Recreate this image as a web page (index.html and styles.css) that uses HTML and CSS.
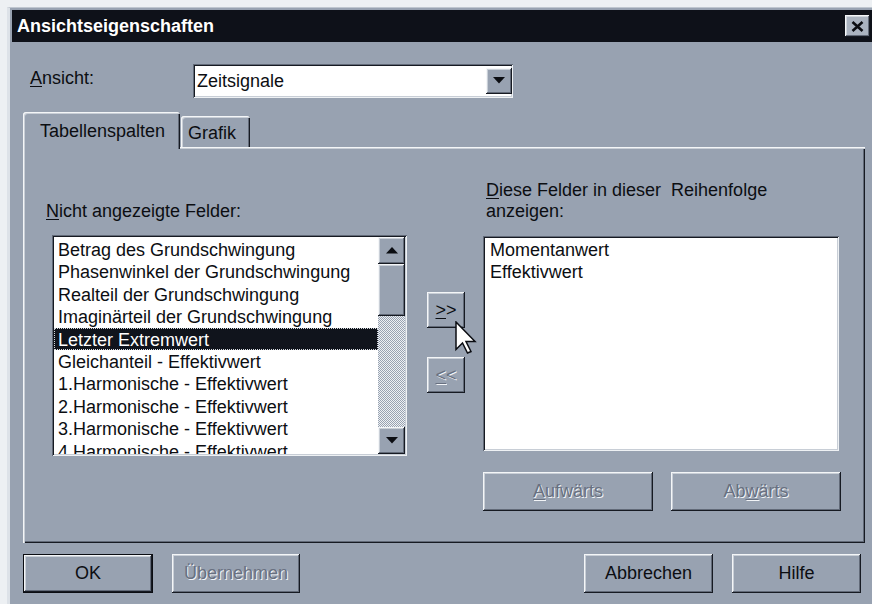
FILE: index.html
```html
<!DOCTYPE html>
<html lang="de">
<head>
<meta charset="utf-8">
<title>Ansichtseigenschaften</title>
<link rel="stylesheet" href="styles.css">
</head>
<body>
<div class="window">
  <div class="titlebar">
    <span class="title">Ansichtseigenschaften</span>
    <span class="close-btn">
      <svg width="13" height="11" viewBox="0 0 13 11"><path d="M1.5 1 L11.5 10 M11.5 1 L1.5 10" stroke="#0b0d12" stroke-width="2.6" fill="none"/></svg>
    </span>
  </div>

  <div class="content">
    <div class="view-row">
      <span class="view-label"><u>A</u>nsicht:</span>
      <div class="combo">
        <span class="combo-text">Zeitsignale</span>
        <span class="combo-btn">
          <svg width="12" height="7" viewBox="0 0 12 7"><path d="M0 0 H12 L6 6.5 Z" fill="#0b0d12"/></svg>
        </span>
      </div>
    </div>

    <div class="tabs">
      <div class="tab tab-active">Tabellenspalten</div>
      <div class="tab tab-inactive">Grafik</div>
    </div>

    <div class="panel">
      <div class="col col-left">
        <div class="caption"><span><u>N</u>icht angezeigte Felder:</span></div>
        <div class="listbox listbox-left">
          <ul class="items">
            <li>Betrag des Grundschwingung</li>
            <li>Phasenwinkel der Grundschwingung</li>
            <li>Realteil der Grundschwingung</li>
            <li>Imaginärteil der Grundschwingung</li>
            <li class="sel">Letzter Extremwert</li>
            <li>Gleichanteil - Effektivwert</li>
            <li>1.Harmonische - Effektivwert</li>
            <li>2.Harmonische - Effektivwert</li>
            <li>3.Harmonische - Effektivwert</li>
            <li>4.Harmonische - Effektivwert</li>
          </ul>
          <div class="scrollbar">
            <span class="sb-btn">
              <svg width="12" height="7" viewBox="0 0 12 7"><path d="M0 6.5 H12 L6 0 Z" fill="#0b0d12"/></svg>
            </span>
            <span class="sb-thumb"></span>
            <span class="sb-track"></span>
            <span class="sb-btn">
              <svg width="12" height="7" viewBox="0 0 12 7"><path d="M0 0 H12 L6 6.5 Z" fill="#0b0d12"/></svg>
            </span>
          </div>
        </div>
      </div>

      <div class="col col-mid">
        <span class="btn btn-move"><u>&gt;</u>&gt;</span>
        <span class="btn btn-move disabled"><u>&lt;</u>&lt;</span>
      </div>

      <div class="col col-right">
        <div class="caption caption-right"><span><u>D</u>iese Felder in dieser&nbsp; Reihenfolge</span><span>anzeigen:</span></div>
        <div class="listbox listbox-right">
          <ul class="items">
            <li>Momentanwert</li>
            <li>Effektivwert</li>
          </ul>
        </div>
        <div class="order-buttons">
          <span class="btn btn-order disabled"><u>A</u>ufwärts</span>
          <span class="btn btn-order disabled">Ab<u>w</u>ärts</span>
        </div>
      </div>
    </div>

    <div class="footer">
      <span class="btn btn-default">OK</span>
      <span class="btn btn-apply disabled">Übernehmen</span>
      <span class="btn btn-cancel">Abbrechen</span>
      <span class="btn btn-help">Hilfe</span>
    </div>
  </div>
</div>

<svg class="cursor" width="22" height="34" viewBox="0 0 22 34">
  <path d="M1 1 V28.5 L7.5 22 L12.5 32 L16 30.5 L11 20.5 H20 Z" fill="#ffffff" stroke="#0b0d12" stroke-width="1.5" stroke-linejoin="miter"/>
</svg>
</body>
</html>
```

FILE: styles.css
```css
* {
  box-sizing: border-box;
}

html,
body {
  margin: 0;
  padding: 0;
}

body {
  width: 872px;
  height: 604px;
  overflow: hidden;
  background: #edf0f3;
  font-family: "Liberation Sans", Arial, sans-serif;
  font-size: 18px;
  color: #0c0e12;
}

u {
  text-decoration: underline;
  text-underline-offset: 2px;
}

/* dialog frame */
.window {
  margin: 7px 0 0 7px;
  width: 865px;
  height: 597px;
  background: #98a2b1;
  border-top: 1px solid #bfc6cf;
  border-left: 3px solid #dde2e8;
  padding: 2px 0 0 2px;
}

.titlebar {
  height: 32px;
  background: #0e1119;
  display: flex;
  align-items: center;
  justify-content: space-between;
  padding: 0 2px 0 5px;
}

.title {
  color: #ffffff;
  font-weight: bold;
  font-size: 18px;
}

.close-btn {
  width: 25px;
  height: 22px;
  display: flex;
  align-items: center;
  justify-content: center;
  background: #aab3c0;
  box-shadow: inset -1px -1px #161a22, inset 1px 1px #f4f6f8, inset -2px -2px #626a78, inset 2px 2px #cfd5dc;
}

.content {
  padding-left: 11px;
}

/* view selector row */
.view-row {
  display: flex;
  margin-top: 22px;
  height: 34px;
  padding-left: 7px;
}

.view-label {
  width: 163px;
  line-height: 21px;
  margin-top: 4px;
}

.combo {
  width: 320px;
  height: 34px;
  background: #ffffff;
  display: flex;
  align-items: center;
  padding: 2px 1px 2px 4px;
  box-shadow: inset 1px 1px #626a78, inset -1px -1px #eef1f4, inset 2px 2px #161a22, inset -2px -2px #c8ced6;
}

.combo-text {
  flex: 1;
}

.combo-btn {
  width: 26px;
  height: 26px;
  margin-top: -1px;
  display: flex;
  align-items: center;
  justify-content: center;
  background: #98a2b1;
  box-shadow: inset -1px -1px #161a22, inset 1px 1px #f4f6f8, inset -2px -2px #626a78, inset 2px 2px #c9cfd7;
}

/* tab strip */
.tabs {
  display: flex;
  align-items: flex-start;
  margin-top: 14px;
  height: 35px;
  position: relative;
  z-index: 1;
}

.tab {
  background: #98a2b1;
  border-radius: 3px 3px 0 0;
  line-height: 21px;
  white-space: nowrap;
}

.tab-active {
  width: 157px;
  height: 37px;
  padding: 9px 0 0 17px;
  box-shadow: inset 1px 1px #f4f6f8, inset 2px 2px #c9cfd7, inset -1px 0 #161a22, inset -2px 0 #626a78;
}

.tab-inactive {
  width: 69px;
  height: 31px;
  margin: 4px 0 0 1px;
  padding: 7px 0 0 7px;
  box-shadow: inset 1px 1px #f4f6f8, inset 2px 2px #c9cfd7, inset -1px 0 #161a22, inset -2px 0 #626a78;
}

/* tab page */
.panel {
  width: 842px;
  height: 396px;
  display: flex;
  padding: 33px 0 0 23px;
  box-shadow: inset 1px 1px #f4f6f8, inset 2px 2px #c9cfd7, inset -1px -1px #161a22, inset -2px -2px #626a78;
}

.col-left {
  width: 361px;
}

.col-mid {
  width: 38px;
  margin-left: 20px;
  padding-top: 112px;
  display: flex;
  flex-direction: column;
  gap: 29px;
}

.col-right {
  width: 358px;
  margin-left: 18px;
}

.caption {
  height: 42px;
  line-height: 21px;
  display: flex;
  flex-direction: column;
  justify-content: flex-end;
  white-space: nowrap;
}

.caption-right {
  padding-left: 3px;
}

/* list boxes */
.listbox {
  background: #ffffff;
  padding: 2px;
  box-shadow: inset 1px 1px #626a78, inset -1px -1px #eef1f4, inset 2px 2px #161a22, inset -2px -2px #c8ced6;
}

.listbox-left {
  width: 355px;
  height: 221px;
  margin: 13px 0 0 6px;
  display: flex;
}

.listbox-right {
  width: 356px;
  height: 215px;
  margin-top: 14px;
}

.items {
  list-style: none;
  margin: 0;
  padding: 1px 0 0 0;
  flex: 1;
  overflow: hidden;
}

.items li {
  height: 22.4px;
  padding: 3px 0 0 4px;
  line-height: 19px;
  white-space: nowrap;
}

.listbox-right .items {
  padding-top: 0;
}

.listbox-right .items li {
  padding-left: 5px;
}

.items li.sel {
  background: #10141c;
  color: #ffffff;
  outline: 1px dotted #d5dae0;
  outline-offset: -1px;
}

/* vertical scroll bar */
.scrollbar {
  width: 27px;
  display: flex;
  flex-direction: column;
}

.sb-btn,
.sb-thumb {
  background: #98a2b1;
  box-shadow: inset -1px -1px #161a22, inset 1px 1px #f4f6f8, inset -2px -2px #626a78, inset 2px 2px #c9cfd7;
}

.sb-btn {
  height: 27px;
  display: flex;
  align-items: center;
  justify-content: center;
}

.sb-thumb {
  height: 52px;
}

.sb-track {
  flex: 1;
  background-color: #98a2b1;
  background-image: repeating-conic-gradient(#eef1f4 0 25%, #98a2b1 0 50%);
  background-size: 2px 2px;
}

/* push buttons */
.btn {
  display: flex;
  align-items: center;
  justify-content: center;
  background: #98a2b1;
  white-space: nowrap;
  box-shadow: inset -1px -1px #161a22, inset 1px 1px #f4f6f8, inset -2px -2px #626a78, inset 2px 2px #c9cfd7;
}

.btn.disabled {
  color: #687080;
  text-shadow: 1px 1px 0 #f2f4f7;
}

.btn-move {
  width: 38px;
  height: 36px;
}

.order-buttons {
  display: flex;
  gap: 18px;
  margin-top: 21px;
}

.btn-order {
  width: 170px;
  height: 39px;
}

.footer {
  display: flex;
  margin-top: 11px;
  padding-right: 11px;
}

.footer .btn {
  height: 39px;
}

.btn-default {
  width: 130px;
  box-shadow: inset 0 0 0 1px #0b0d12, inset -2px -2px #161a22, inset 2px 2px #f4f6f8, inset -3px -3px #626a78, inset 3px 3px #c9cfd7;
}

.btn-apply {
  width: 128px;
  margin-left: 19px;
}

.btn-cancel {
  width: 129px;
  margin-left: auto;
}

.btn-help {
  width: 129px;
  margin-left: 19px;
}

/* mouse pointer over the dialog */
.cursor {
  position: absolute;
  left: 455px;
  top: 321px;
}
```
